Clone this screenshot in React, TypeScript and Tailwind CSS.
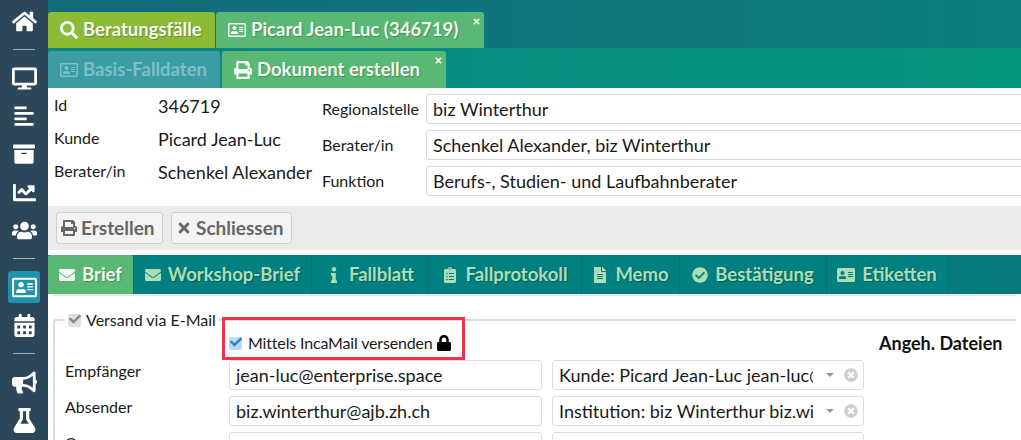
import { ReactNode } from "react";
import type { IconType } from "react-icons";
import {
  FaAddressCard,
  FaAlignLeft,
  FaArchive,
  FaBullhorn,
  FaCalendarAlt,
  FaChartLine,
  FaCheck,
  FaCheckCircle,
  FaClipboardList,
  FaDesktop,
  FaEnvelope,
  FaFileAlt,
  FaFlask,
  FaHome,
  FaInfo,
  FaLock,
  FaPrint,
  FaRegAddressCard,
  FaSearch,
  FaTimes,
  FaTimesCircle,
  FaUsers,
} from "react-icons/fa";

const shadow = "[text-shadow:1px_1px_1px_rgba(0,0,0,0.25)]";

const SideIcon = ({ icon: Icon, size = 25 }: { icon: IconType; size?: number }) => (
  <div className="flex h-[38px] shrink-0 items-center justify-center text-white">
    <Icon size={size} />
  </div>
);

const Divider = () => <div className="mx-auto my-[9px] h-px w-[22px] shrink-0 bg-[#9fb0bb]" />;

const Sidebar = () => (
  <aside className="flex w-[48px] shrink-0 flex-col bg-[#2d475a] pt-[2px]">
    <SideIcon icon={FaHome} />
    <Divider />
    <SideIcon icon={FaDesktop} />
    <SideIcon icon={FaAlignLeft} size={22} />
    <SideIcon icon={FaArchive} size={22} />
    <SideIcon icon={FaChartLine} size={23} />
    <SideIcon icon={FaUsers} />
    <Divider />
    <div className="flex h-[38px] shrink-0 items-center justify-center">
      <div className="flex h-[32px] w-[32px] items-center justify-center rounded-[3px] bg-[#1e93ad] text-white">
        <FaRegAddressCard size={25} />
      </div>
    </div>
    <SideIcon icon={FaCalendarAlt} size={23} />
    <Divider />
    <SideIcon icon={FaBullhorn} />
    <SideIcon icon={FaFlask} />
  </aside>
);

const TopTab = ({
  icon: Icon,
  label,
  bg,
  width,
  closable,
  muted,
}: {
  icon: IconType;
  label: string;
  bg: string;
  width: string;
  closable?: boolean;
  muted?: boolean;
}) => (
  <div
    className={`relative flex h-full items-center gap-[5px] rounded-t-[3px] pl-[12px] text-[18.5px] font-bold ${bg} ${width} ${
      muted ? "text-[#7cc0c4]" : `text-[#f4f8f2] ${shadow}`
    }`}
  >
    <Icon size={18} />
    <span>{label}</span>
    {closable ? <FaTimes size={9} className="absolute right-[3px] top-[5px] text-[#e6f3e6]" /> : null}
  </div>
);

const InfoRow = ({ label, value }: { label: string; value: string }) => (
  <div className="flex h-[33px] items-start text-[#1a1a1a]">
    <span className="w-[104px] text-[16px] leading-[20px]">{label}</span>
    <span className="whitespace-nowrap text-[18px] leading-[22px]">{value}</span>
  </div>
);

const SelectRow = ({ label, value }: { label: string; value: string }) => (
  <div className="flex h-[30px] items-center">
    <span className="w-[104px] shrink-0 text-[16px] text-[#1a1a1a]">{label}</span>
    <div className="flex h-[30px] w-[620px] shrink-0 items-center rounded-l-[3px] border border-[#d8d8d8] pl-[6px] text-[18px] text-[#1a1a1a]">
      {value}
    </div>
  </div>
);

const ToolButton = ({
  icon: Icon,
  label,
  size,
  width,
}: {
  icon: IconType;
  label: string;
  size: number;
  width: string;
}) => (
  <button
    className={`flex h-[32px] items-center gap-[4px] rounded-[3px] border border-[#d0d0d0] bg-[#f3f3f3] pl-[4px] text-[19px] font-bold text-[#666666] ${width}`}
  >
    <Icon size={size} />
    {label}
  </button>
);

const SectionTab = ({
  icon: Icon,
  label,
  active,
  width,
  size = 16,
}: {
  icon: IconType;
  label: string;
  active?: boolean;
  width: string;
  size?: number;
}) => (
  <div
    className={`flex h-full shrink-0 items-center justify-center gap-[7px] rounded-t-[3px] border-r border-[#0c6f73] text-[18.5px] font-bold ${shadow} ${width} ${
      active ? "bg-[#59b974] text-[#f4f8f2]" : "bg-[#008080] text-[#aedcb4]"
    }`}
  >
    <Icon size={size} />
    <span>{label}</span>
  </div>
);

const Field = ({ children, width }: { children?: ReactNode; width: string }) => (
  <div
    className={`flex h-[30px] shrink-0 items-center rounded-[3px] border border-[#dcdcdc] pl-[6px] text-[18px] text-[#1a1a1a] ${width}`}
  >
    {children}
  </div>
);

const Combo = ({ value }: { value?: string }) => (
  <div className="flex h-[30px] w-[312px] shrink-0 items-center rounded-[3px] border border-[#dcdcdc] pl-[6px] text-[18px] text-[#1a1a1a]">
    <span className="w-[254px] overflow-hidden whitespace-nowrap">{value}</span>
    <span className="ml-[13px] h-0 w-0 border-x-[4px] border-t-[4px] border-x-transparent border-t-[#999999]" />
    <FaTimesCircle size={14} className="ml-[10px] text-[#cfcfcf]" />
  </div>
);

const MailRow = ({ label, mail, combo }: { label: string; mail?: string; combo?: string }) => (
  <div className="flex items-start">
    <span className="w-[164px] shrink-0 text-[16px] leading-[21px] text-[#1a1a1a]">{label}</span>
    <Field width="w-[313px]">{mail}</Field>
    <div className="w-[10px] shrink-0" />
    <Combo value={combo} />
  </div>
);

export default function App() {
  return (
    <div className="flex h-[440px] w-[1021px] overflow-hidden bg-white font-['Lato',sans-serif]">
      <Sidebar />
      <main className="min-w-0 flex-1">
        <div className="flex h-[48px] gap-px bg-gradient-to-r from-[#136a7b] to-[#0a7f7c] pt-[12px]">
          <TopTab icon={FaSearch} label="Beratungsfälle" bg="bg-[#8cbb36]" width="w-[167px]" />
          <TopTab icon={FaRegAddressCard} label="Picard Jean-Luc (346719)" bg="bg-[#59b974]" width="w-[268px]" closable />
        </div>
        <div className="flex h-[40px] gap-[2px] bg-gradient-to-r from-[#0a8580] to-[#06957f] pt-[3px]">
          <TopTab icon={FaRegAddressCard} label="Basis-Falldaten" bg="bg-[#3b9da3]" width="w-[172px]" muted />
          <TopTab icon={FaPrint} label="Dokument erstellen" bg="bg-[#59b974]" width="w-[224px]" closable />
        </div>
        <section className="flex h-[118px]">
          <div className="w-[274px] shrink-0 pl-[6px] pt-[7px]">
            <InfoRow label="Id" value="346719" />
            <InfoRow label="Kunde" value="Picard Jean-Luc" />
            <InfoRow label="Berater/in" value="Schenkel Alexander" />
          </div>
          <div className="flex flex-col gap-[6px] pt-[6px]">
            <SelectRow label="Regionalstelle" value="biz Winterthur" />
            <SelectRow label="Berater/in" value="Schenkel Alexander, biz Winterthur" />
            <SelectRow label="Funktion" value="Berufs-, Studien- und Laufbahnberater" />
          </div>
        </section>
        <div className="flex h-[44px] items-center gap-[8px] bg-[#ebebeb] pl-[8px]">
          <ToolButton icon={FaPrint} label="Erstellen" size={16} width="w-[107px]" />
          <ToolButton icon={FaTimes} label="Schliessen" size={16} width="w-[121px]" />
        </div>
        <div className="mt-[5px] flex h-[39px] bg-gradient-to-r from-[#008080] to-[#067a7d]">
          <SectionTab icon={FaEnvelope} label="Brief" width="w-[86px]" active />
          <SectionTab icon={FaEnvelope} label="Workshop-Brief" width="w-[178px]" />
          <SectionTab icon={FaInfo} label="Fallblatt" width="w-[117px]" />
          <SectionTab icon={FaClipboardList} label="Fallprotokoll" width="w-[153px]" />
          <SectionTab icon={FaFileAlt} label="Memo" width="w-[98px]" />
          <SectionTab icon={FaCheckCircle} label="Bestätigung" width="w-[147px]" />
          <SectionTab icon={FaAddressCard} label="Etiketten" width="w-[121px]" size={18} />
        </div>
        <div className="mx-[5px] h-[146px] border-t-2 border-[#e6e6e6] pt-[13px]">
          <fieldset className="relative h-[140px] rounded-tl-[3px] border-l-2 border-t-2 border-[#dcdcdc] pl-[10px]">
            <legend className="flex h-[22px] items-center gap-[5px] px-[3px] text-[16px] text-[#1a1a1a]">
              <span className="relative h-[13px] w-[13px] rounded-[2px] bg-[#dedede]">
                <FaCheck size={12} className="absolute left-[1px] top-[-1px] text-[#8a8a8a]" />
              </span>
              Versand via E-Mail
            </legend>
            <div className="relative flex h-[24px] items-center">
              <div className="ml-[164px] flex items-center gap-[6px] text-[16px] tracking-[-0.01em] text-[#1a1a1a]">
                <span className="relative h-[13px] w-[13px] rounded-[2px] bg-[#bcd9f2]">
                  <FaCheck size={12} className="absolute left-[1px] top-[-1px] text-[#2a7fd0]" />
                </span>
                Mittels IncaMail versenden
                <FaLock size={16} className="-ml-[3px] text-black" />
              </div>
              <div className="absolute left-[157px] top-[-14px] h-[43px] w-[243px] border-[3px] border-[#f2314b]" />
              <span className="absolute left-[814px] top-[-1px] whitespace-nowrap text-[18px] font-bold text-[#111111]">
                Angeh. Dateien
              </span>
            </div>
            <div className="mt-[5px] flex flex-col gap-[6px]">
              <MailRow label="Empfänger" mail="jean-luc@enterprise.space" combo="Kunde: Picard Jean-Luc jean-luc@enterprise.space" />
              <MailRow label="Absender" mail="biz.winterthur@ajb.zh.ch" combo="Institution: biz Winterthur biz.winterthur@ajb.zh.ch" />
              <MailRow label="Cc" />
            </div>
          </fieldset>
        </div>
      </main>
    </div>
  );
}
